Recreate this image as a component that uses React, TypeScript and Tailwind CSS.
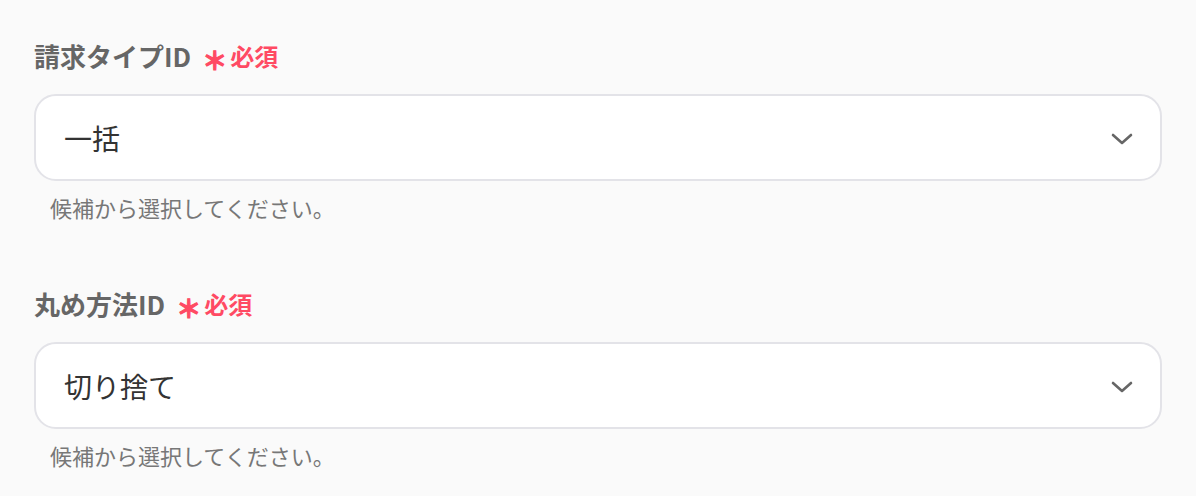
const fields = [
  { label: '請求タイプID', value: '一括' },
  { label: '丸め方法ID', value: '切り捨て' },
];

function SelectField({ label, value }: { label: string; value: string }) {
  return (
    <div className="flex flex-col">
      <div className="flex items-center h-[36px]">
        <span className="text-[26px] font-bold text-[#666666] leading-none">{label}</span>
        <span className="ml-[11px] mt-[6px] text-[25px] font-bold text-[#ff4a63] leading-none [-webkit-text-stroke:1.2px_#ff4a63]">＊</span>
        <span className="ml-[3px] text-[24px] font-bold text-[#ff4a63] leading-none">必須</span>
      </div>
      <div className="mt-[20px] h-[87px] w-[1128px] rounded-[22px] border-2 border-[#e3e3e8] bg-white flex items-center pl-[28px] pr-[27px]">
        <span className="flex-1 text-[28px] text-[#333333]">{value}</span>
        <svg width="22" height="12" viewBox="0 0 22 12" fill="none" className="mt-[2px]">
          <path d="M2 2 L11 10 L20 2" stroke="#666666" strokeWidth="2.6" strokeLinecap="round" strokeLinejoin="round" />
        </svg>
      </div>
      <p className="mt-[11px] pl-[16px] text-[22px] text-[#777777] leading-[30px]">候補から選択してください。</p>
    </div>
  );
}

export default function App() {
  return (
    <div
      className="w-[1196px] h-[496px] bg-[#fafafa] pl-[34px] pt-[38px] flex flex-col gap-[64px]"
      style={{ fontFamily: '"Noto Sans CJK JP", "Noto Sans", sans-serif' }}
    >
      {fields.map((f) => (
        <SelectField key={f.label} label={f.label} value={f.value} />
      ))}
    </div>
  );
}
